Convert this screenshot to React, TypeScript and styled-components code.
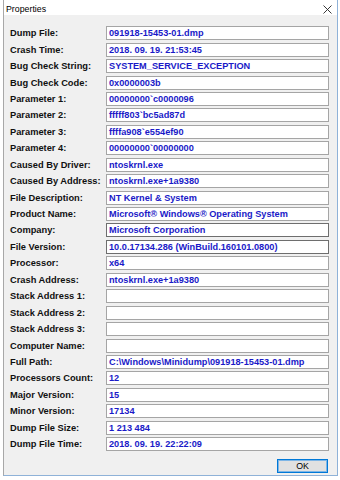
import React from 'react';
import styled, {createGlobalStyle} from 'styled-components';

type Field = {
	label: string,
	value: string,
	dark?: boolean
}

type BoxTheme = {
	dark: boolean
}

const fields: Field[] = [
	{label: 'Dump File:', value: '091918-15453-01.dmp'},
	{label: 'Crash Time:', value: '2018. 09. 19. 21:53:45'},
	{label: 'Bug Check String:', value: 'SYSTEM_SERVICE_EXCEPTION'},
	{label: 'Bug Check Code:', value: '0x0000003b'},
	{label: 'Parameter 1:', value: '00000000`c0000096'},
	{label: 'Parameter 2:', value: 'fffff803`bc5ad87d'},
	{label: 'Parameter 3:', value: 'ffffa908`e554ef90'},
	{label: 'Parameter 4:', value: '00000000`00000000'},
	{label: 'Caused By Driver:', value: 'ntoskrnl.exe'},
	{label: 'Caused By Address:', value: 'ntoskrnl.exe+1a9380'},
	{label: 'File Description:', value: 'NT Kernel & System'},
	{label: 'Product Name:', value: 'Microsoft® Windows® Operating System'},
	{label: 'Company:', value: 'Microsoft Corporation', dark: true},
	{label: 'File Version:', value: '10.0.17134.286 (WinBuild.160101.0800)', dark: true},
	{label: 'Processor:', value: 'x64'},
	{label: 'Crash Address:', value: 'ntoskrnl.exe+1a9380'},
	{label: 'Stack Address 1:', value: ''},
	{label: 'Stack Address 2:', value: ''},
	{label: 'Stack Address 3:', value: ''},
	{label: 'Computer Name:', value: ''},
	{label: 'Full Path:', value: 'C:\\Windows\\Minidump\\091918-15453-01.dmp'},
	{label: 'Processors Count:', value: '12'},
	{label: 'Major Version:', value: '15'},
	{label: 'Minor Version:', value: '17134'},
	{label: 'Dump File Size:', value: '1 213 484'},
	{label: 'Dump File Time:', value: '2018. 09. 19. 22:22:09'},
]

const GlobalStyle = createGlobalStyle`
	html, body {
		margin: 0;
		padding: 0;
		background: #ffffff;
	}
`

const Window = styled.div`
	box-sizing: border-box;
	width: 335px;
	height: 476px;
	margin-left: 3px;
	background: #f0f0f0;
	border: 1px solid #8fb2d8;
	border-top: none;
	border-left-color: #a8a8a8;
	display: flex;
	flex-direction: column;
	font-family: "Liberation Sans", Arial, sans-serif;
`

const TitleBar = styled.div`
	height: 15px;
	background: #ffffff;
	display: flex;
	align-items: center;
	justify-content: space-between;
	padding: 0 5px 0 2px;
`

const Title = styled.span`
	font-size: 8.8px;
	color: #000000;
	padding-top: 3px;
`

const CloseIcon = styled.svg`
	width: 9px;
	height: 9px;
	margin-top: 3px;
`

const Content = styled.div`
	display: flex;
	flex-direction: column;
	padding: 10px 0 0 6px;
`

const Row = styled.div`
	display: grid;
	grid-template-columns: 96px 223px;
	align-items: center;
	height: 16.44px;
`

const Label = styled.span`
	font-size: 9.3px;
	font-weight: 700;
	color: #111111;
	white-space: nowrap;
`

const Box = styled.div<BoxTheme>`
	box-sizing: border-box;
	height: 14px;
	background: #ffffff;
	border: 1px solid ${props => props.dark ? '#6e6e6e' : '#a5a5a5'};
	display: flex;
	align-items: center;
	padding-left: 2px;
	font-size: 9.2px;
	font-weight: 700;
	color: #1a1ac8;
	white-space: nowrap;
	overflow: hidden;
`

const Footer = styled.div`
	display: flex;
	justify-content: flex-end;
	padding: 7px 8px 0 0;
`

const OkButton = styled.button`
	box-sizing: border-box;
	width: 51px;
	height: 14px;
	margin-right: 1px;
	padding: 0;
	background: #e1e1e1;
	border: 1px solid #0078d7;
	box-shadow: inset 0 0 0 1px #7fb6e6;
	font-family: "Liberation Sans", Arial, sans-serif;
	font-size: 8.8px;
	color: #000000;
`

const App = () => {
	return (
		<>
			<GlobalStyle />
			<Window>
				<TitleBar>
					<Title>Properties</Title>
					<CloseIcon viewBox='0 0 9 9'>
						<path d='M0.5 0.5 L8.5 8.5 M8.5 0.5 L0.5 8.5' stroke='#222' strokeWidth='0.9' fill='none' />
					</CloseIcon>
				</TitleBar>
				<Content>
					{fields.map(field => (
						<Row key={field.label}>
							<Label>{field.label}</Label>
							<Box dark={!!field.dark}>{field.value}</Box>
						</Row>
					))}
				</Content>
				<Footer>
					<OkButton>OK</OkButton>
				</Footer>
			</Window>
		</>
	);
};

export default App;
